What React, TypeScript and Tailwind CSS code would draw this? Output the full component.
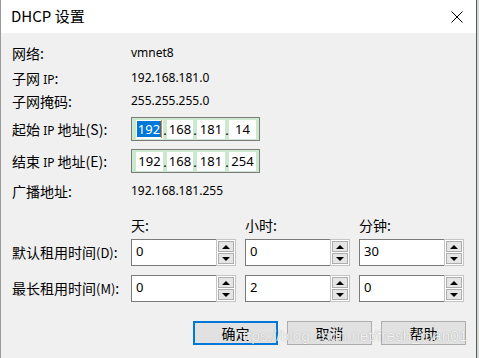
import React from "react";

const CJK = "font-['Noto_Sans_CJK_SC',sans-serif]";
const LAT = "font-['Noto_Sans','Noto_Sans_CJK_SC',sans-serif]";

function Arrow({ up }: { up?: boolean }) {
  return (
    <svg width="8" height="4" viewBox="0 0 8 4">
      {up ? <polygon points="0,4 8,4 4,0" fill="#000" /> : <polygon points="0,0 8,0 4,4" fill="#000" />}
    </svg>
  );
}

function Spin({ v }: { v: string }) {
  return (
    <div className="flex h-[27px] w-[105px]">
      <div className={`flex-1 border border-r-0 border-[#7a7a7a] bg-white pl-[4px] pt-[3px] text-[13px] leading-[16px] text-[#000] ${LAT}`}>{v}</div>
      <div className="flex w-[20px] flex-col gap-[1px] border border-[#c4c4c4] bg-white p-[1px]">
        <div className="flex flex-1 items-center justify-center border border-[#adadad] bg-[#e5e5e5]">
          <Arrow up />
        </div>
        <div className="flex flex-1 items-center justify-center border border-[#adadad] bg-[#e5e5e5]">
          <Arrow />
        </div>
      </div>
    </div>
  );
}

function Seg({ t, w, sel }: { t: string; w: number; sel?: boolean }) {
  return (
    <div
      className={`flex h-[19px] items-center justify-center bg-white text-[13px] ${LAT}`}
      style={{ width: w }}
    >
      {sel ? (
        <span className="flex h-[16px] items-center">
          <span className="bg-[#0078d7] px-[1px] leading-[16px] text-white">{t}</span>
          <span className="h-[18px] w-[1px] bg-[#ff7a00]" />
        </span>
      ) : (
        <span className="leading-[16px]">{t}</span>
      )}
    </div>
  );
}

function Dot() {
  return <div className={`flex h-[19px] w-[4px] items-end justify-center pb-[2px] text-[13px] leading-[13px] ${LAT}`}>.</div>;
}

function IpBox({ parts, sel }: { parts: string[]; sel?: boolean }) {
  return (
    <div className="flex h-[24px] w-[129px] items-center border border-[#7a7a7a] bg-[#cce8cf] pl-[4px]">
      <Seg t={parts[0]} w={27} sel={sel} />
      <Dot />
      <Seg t={parts[1]} w={26} />
      <Dot />
      <Seg t={parts[2]} w={28} />
      <Dot />
      <Seg t={parts[3]} w={27} />
    </div>
  );
}

function Label({ children }: { children: React.ReactNode }) {
  return <div className={`w-[119px] shrink-0 text-[14px] text-black ${CJK}`}>{children}</div>;
}

function Btn({ t, primary }: { t: string; primary?: boolean }) {
  return (
    <div
      className={`flex h-[24px] w-[85px] items-center justify-center bg-[#e1e1e1] text-[14px] text-black ${CJK} ${
        primary ? "border-2 border-[#0078d7]" : "border border-[#adadad]"
      }`}
    >
      {t}
    </div>
  );
}

export default function App() {
  return (
    <div className="relative flex h-[358px] w-[479px] overflow-hidden bg-[#d4d8d4]">
      <div className="flex h-full w-[477px] flex-col border-l border-r border-l-[#9a9a9a] border-r-[#5a5a5a] bg-[#f0f0f0]">
        {/* title bar */}
        <div className="flex h-[33px] shrink-0 items-center justify-between bg-white pl-[10px] pr-[13px]">
          <div className={`text-[15px] text-black ${CJK}`}>DHCP 设置</div>
          <svg width="12" height="12" viewBox="0 0 12 12">
            <path d="M0.5 0.5 L11.5 11.5 M11.5 0.5 L0.5 11.5" stroke="#000" strokeWidth="1" />
          </svg>
        </div>

        {/* body */}
        <div className="flex flex-col pl-[11px] pt-[10px]">
          <div className="flex h-[20px] items-center">
            <Label>网络:</Label>
            <div className={`text-[12px] ${LAT}`}>vmnet8</div>
          </div>
          <div className="mt-[5px] flex h-[20px] items-center">
            <Label>
              子网 <span className={`text-[12px] ${LAT}`}>IP</span>:
            </Label>
            <div className={`text-[12px] ${LAT}`}>192.168.181.0</div>
          </div>
          <div className="mt-[3px] flex h-[20px] items-center">
            <Label>子网掩码:</Label>
            <div className={`text-[12px] ${LAT}`}>255.255.255.0</div>
          </div>
          <div className="mt-[6px] flex h-[24px] items-center">
            <Label>
              起始 <span className={`text-[12px] ${LAT}`}>IP</span> 地址(S):
            </Label>
            <IpBox parts={["192", "168", "181", "14"]} sel />
          </div>
          <div className="mt-[8px] flex h-[24px] items-center">
            <Label>
              结束 <span className={`text-[12px] ${LAT}`}>IP</span> 地址(E):
            </Label>
            <IpBox parts={["192", "168", "181", "254"]} />
          </div>
          <div className="mt-[8px] flex h-[20px] items-center">
            <Label>广播地址:</Label>
            <div className={`text-[12px] ${LAT}`}>192.168.181.255</div>
          </div>

          <div className={`mt-[14px] flex h-[20px] items-center text-[14px] ${CJK}`}>
            <div className="w-[119px]" />
            <div className="w-[114px]">天:</div>
            <div className="w-[114px]">小时:</div>
            <div>分钟:</div>
          </div>

          <div className="mt-[4px] flex h-[27px] items-center">
            <Label>
              默认租用时间<span className="text-[13px]">(D)</span>:
            </Label>
            <div className="flex gap-[9px]">
              <Spin v="0" />
              <Spin v="0" />
              <Spin v="30" />
            </div>
          </div>
          <div className="mt-[9px] flex h-[27px] items-center">
            <Label>
              最长租用时间<span className="text-[13px]">(M)</span>:
            </Label>
            <div className="flex gap-[9px]">
              <Spin v="0" />
              <Spin v="2" />
              <Spin v="0" />
            </div>
          </div>

          <div className="mt-[19px] flex gap-[9px] pl-[181px]">
            <Btn t="确定" primary />
            <Btn t="取消" />
            <Btn t="帮助" />
          </div>
        </div>
      </div>

      <div
        className={`pointer-events-none absolute left-[234px] top-[326px] text-[15.5px] leading-[20px] text-[rgba(255,255,255,0.85)] font-['Liberation_Sans',sans-serif] [text-shadow:0_0_1px_rgba(0,0,0,0.35)]`}
      >
        https://blog.csdn.net/fresh_man01
      </div>
    </div>
  );
}
